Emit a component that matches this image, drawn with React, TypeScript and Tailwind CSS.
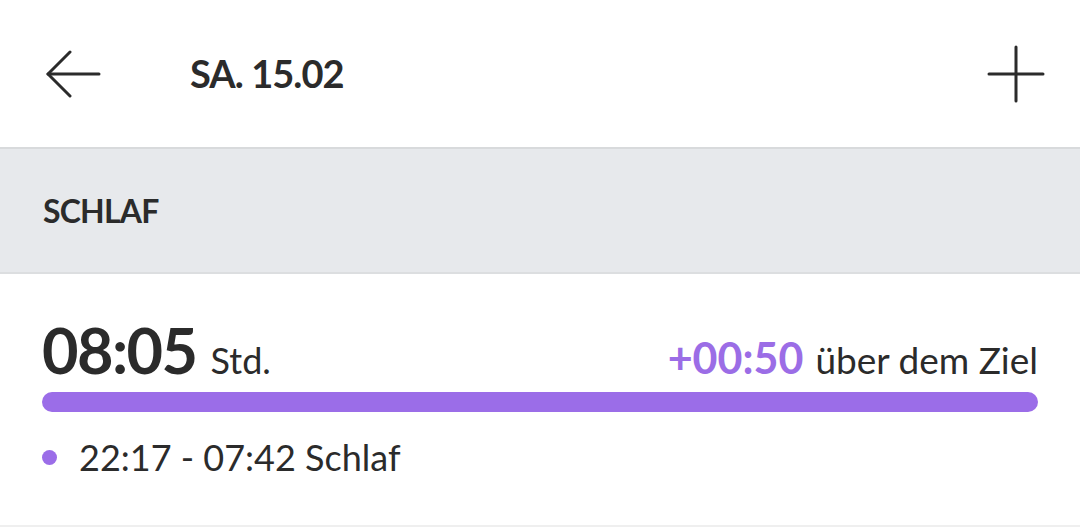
export default function App() {
  return (
    <div className="w-[1080px] h-[532px] bg-white text-[#2b2b2b] overflow-hidden" style={{ fontFamily: 'Lato, "Liberation Sans", sans-serif' }}>
      {/* Header */}
      <div className="h-[147px] flex items-center justify-between pl-[46px] pr-[35px]">
        <div className="flex items-center">
          <svg width="56" height="48" viewBox="0 0 56 48" fill="none" stroke="#2b2b2b" strokeWidth="3" strokeLinecap="round" strokeLinejoin="round">
            <path d="M2 24H53" />
            <path d="M24 2L2 24L24 46" />
          </svg>
          <span className="ml-[88px] text-[38px] font-bold tracking-tight">SA. 15.02</span>
        </div>
        <svg width="58" height="58" viewBox="0 0 58 58" fill="none" stroke="#2b2b2b" strokeWidth="3" strokeLinecap="round">
          <path d="M29 2V56" />
          <path d="M2 29H56" />
        </svg>
      </div>
      <div className="h-[2px] bg-[#d8dadc]" />

      {/* Section band */}
      <div className="h-[125px] bg-[#e7e9ec] flex items-center px-[43px] border-b-2 border-[#dcdee0]">
        <span className="text-[32px] font-bold tracking-tight">SCHLAF</span>
      </div>

      {/* Sleep entry */}
      <div className="px-[42px] pt-[44px] pb-[50px] border-b-2 border-[#efefef]">
        <div className="flex items-baseline justify-between">
          <div className="flex items-baseline gap-[14px]">
            <span className="text-[63px] font-bold leading-none tracking-tight">08:05</span>
            <span className="text-[36px] leading-none">Std.</span>
          </div>
          <div className="flex items-baseline gap-[12px]">
            <span className="text-[43px] font-bold leading-none text-[#9b6de6]">+00:50</span>
            <span className="text-[37px] leading-none">über dem Ziel</span>
          </div>
        </div>
        <div className="mt-[11px] h-[20px] rounded-full bg-[#9b6de8]" />
        <div className="mt-[27px] flex items-center gap-[22px]">
          <span className="w-[15px] h-[15px] rounded-full bg-[#9b6de8]" />
          <span className="text-[36px] leading-none">22:17 - 07:42 Schlaf</span>
        </div>
      </div>
    </div>
  )
}
